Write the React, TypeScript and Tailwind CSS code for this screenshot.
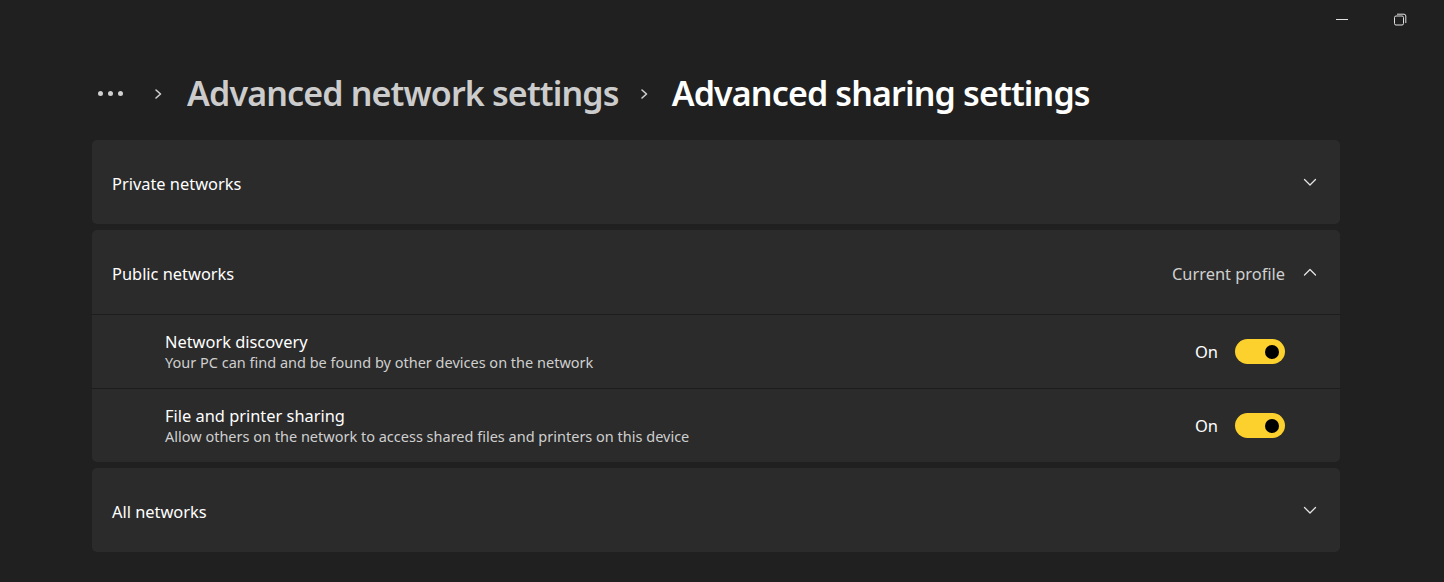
import React from "react";

const ChevronDown = () => (
    <svg width="14" height="14" viewBox="0 0 14 14" fill="none" className="text-[#e4e4e4]">
        <path d="M1.5 4.5 L7 10 L12.5 4.5" stroke="currentColor" strokeWidth="1.3" strokeLinecap="round" strokeLinejoin="round" />
    </svg>
);

const ChevronUp = () => (
    <svg width="14" height="14" viewBox="0 0 14 14" fill="none" className="text-[#e4e4e4]">
        <path d="M1.5 10 L7 4.5 L12.5 10" stroke="currentColor" strokeWidth="1.3" strokeLinecap="round" strokeLinejoin="round" />
    </svg>
);

const Crumb = ({ className }: { className: string }) => (
    <svg width="12" height="14" viewBox="0 0 12 14" fill="none" className={className}>
        <path d="M4 3 L8.5 7 L4 11" stroke="#cfcfcf" strokeWidth="1.6" strokeLinecap="round" strokeLinejoin="round" />
    </svg>
);

const Toggle = () => (
    <div className="w-[50px] h-[25px] rounded-full bg-[#fcd02d] flex items-center justify-end pr-[6px]">
        <div className="w-[14px] h-[14px] rounded-full bg-black" />
    </div>
);

const SettingRow = ({ title, desc }: { title: string; desc: string }) => (
    <div className="flex items-center h-[74px] pl-[73px] pr-[55px] border-t border-[#1d1d1d]">
        <div className="flex-1">
            <div className="text-[16.4px] leading-[22px] text-white">{title}</div>
            <div className="text-[14.5px] leading-[19px] text-[#cfcfcf]">{desc}</div>
        </div>
        <span className="text-[16.5px] text-white mr-[17px] mt-[2px]">On</span>
        <Toggle />
    </div>
);

const App = () => {
    return (
        <div className="w-[1444px] h-[582px] bg-[#202020] text-white overflow-hidden" style={{ fontFamily: '"Noto Sans", "Open Sans", sans-serif' }}>
            <div className="flex justify-end items-center h-[38px]">
                <div className="w-[58px] flex justify-center">
                    <div className="w-[12px] h-px bg-[#e0e0e0]" />
                </div>
                <div className="w-[58px] flex justify-center mr-[15px]">
                    <svg width="13" height="13" viewBox="0 0 13 13" fill="none">
                        <rect x="0.5" y="3" width="9" height="9" rx="1.5" stroke="#e0e0e0" strokeWidth="1" />
                        <path d="M3 1.2 H10 Q11.8 1.2 11.8 3 V10" stroke="#e0e0e0" strokeWidth="1" fill="none" />
                    </svg>
                </div>
            </div>

            <div className="px-[92px] w-[1340px] box-content">
                <div className="flex items-center h-[102px] pt-[9px]">
                    <div className="flex gap-[5px] ml-[6px] mr-[29px]">
                        <span className="w-[5px] h-[5px] rounded-full bg-[#d0d0d0]" />
                        <span className="w-[5px] h-[5px] rounded-full bg-[#d0d0d0]" />
                        <span className="w-[5px] h-[5px] rounded-full bg-[#d0d0d0]" />
                    </div>
                    <Crumb className="mr-[23px]" />
                    <span className="text-[34px] font-semibold text-[#cccccc] tracking-[-0.86px]">Advanced network settings</span>
                    <Crumb className="ml-[19px] mr-[22px]" />
                    <span className="text-[34px] font-semibold text-white tracking-[-0.86px]">Advanced sharing settings</span>
                </div>

                <div className="flex flex-col gap-[6px] w-[1248px]">
                    <div className="h-[84px] rounded-[5px] bg-[#2b2b2b] flex items-center pl-[20px] pr-[23px]">
                        <span className="flex-1 text-[16.4px] mt-[4px]">Private networks</span>
                        <ChevronDown />
                    </div>

                    <div className="rounded-[5px] bg-[#2b2b2b]">
                        <div className="h-[84px] flex items-center pl-[20px] pr-[23px]">
                            <span className="flex-1 text-[16.4px] mt-[4px]">Public networks</span>
                            <span className="text-[16.4px] text-[#d0d0d0] mr-[18px] mt-[4px]">Current profile</span>
                            <ChevronUp />
                        </div>
                        <SettingRow title="Network discovery" desc="Your PC can find and be found by other devices on the network" />
                        <SettingRow title="File and printer sharing" desc="Allow others on the network to access shared files and printers on this device" />
                    </div>

                    <div className="h-[84px] rounded-[5px] bg-[#2b2b2b] flex items-center pl-[20px] pr-[23px]">
                        <span className="flex-1 text-[16.4px] mt-[4px]">All networks</span>
                        <ChevronDown />
                    </div>
                </div>
            </div>
        </div>
    );
};

export default App;
